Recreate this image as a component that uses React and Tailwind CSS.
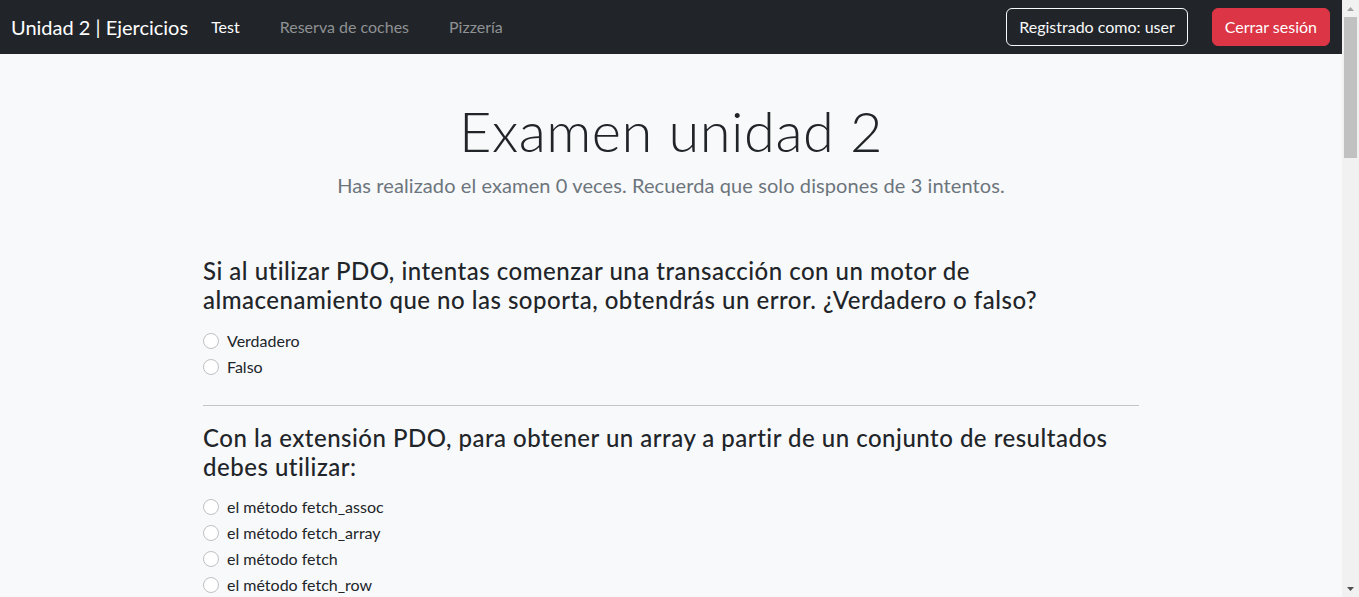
function Radio({ label }) {
  return (
    <label className="flex items-center h-6 mb-[2px] text-[16px] leading-6 text-[#212529]">
      <span className="w-4 h-4 rounded-full border border-[#bfc1c3] bg-white shrink-0" />
      <span className="ml-2">{label}</span>
    </label>
  );
}

function Question({ lines, options, optionsClass }) {
  return (
    <div>
      <h4 className="text-[24px] font-medium leading-[29px] text-[#212529] tracking-[0.5px]">
        {lines.map((l, i) => (
          <span key={i} className="block whitespace-nowrap">{l}</span>
        ))}
      </h4>
      <div className={optionsClass}>
        {options.map((o) => (
          <Radio key={o} label={o} />
        ))}
      </div>
    </div>
  );
}

export default function App() {
  return (
    <div className="flex h-[597px] overflow-hidden font-['Lato',sans-serif]">
      <div className="flex-1 min-w-0 bg-[#f8f9fa]">
        <nav className="h-[54px] bg-[#212529] flex items-center justify-between pl-[11px] pr-3 pb-[1px]">
          <div className="flex items-center">
            <span className="text-[20px] leading-[30px] text-white">Unidad 2 | Ejercicios</span>
            <div className="flex items-center ml-[23px] gap-10 text-[16px] leading-6">
              <span className="text-white">Test</span>
              <span className="text-[#8f9193]">Reserva de coches</span>
              <span className="text-[#8f9193]">Pizzería</span>
            </div>
          </div>
          <div className="flex items-center gap-6">
            <span className="border border-[#f8f9fa] rounded-[6px] px-3 py-[6px] text-[16px] leading-6 text-[#f8f9fa]">
              Registrado como: user
            </span>
            <span className="border border-[#dc3545] bg-[#dc3545] rounded-[6px] px-3 py-[6px] text-[16px] leading-6 text-white">
              Cerrar sesión
            </span>
          </div>
        </nav>
        <main className="w-[936px] mx-auto">
          <h1 className="mt-[43px] text-center text-[56px] font-light leading-[67px] tracking-[0.5px] text-[#212529]">
            Examen unidad 2
          </h1>
          <p className="mt-[6px] text-center text-[20px] font-normal leading-[30px] tracking-[0.1px] text-[#6c757d]">
            Has realizado el examen 0 veces. Recuerda que solo dispones de 3 intentos.
          </p>
          <div className="mt-[56px]">
            <Question
              lines={[
                'Si al utilizar PDO, intentas comenzar una transacción con un motor de',
                'almacenamiento que no las soporta, obtendrás un error. ¿Verdadero o falso?',
              ]}
              options={['Verdadero', 'Falso']}
              optionsClass="mt-[15px]"
            />
          </div>
          <hr className="mt-[26px] mb-[17px] border-0 border-t border-[#c4c5c7]" />
          <Question
            lines={[
              'Con la extensión PDO, para obtener un array a partir de un conjunto de resultados',
              'debes utilizar:',
            ]}
            options={['el método fetch_assoc', 'el método fetch_array', 'el método fetch', 'el método fetch_row']}
            optionsClass="mt-[14px]"
          />
        </main>
      </div>
      <div className="w-[17px] h-[597px] bg-[#f1f1f1] flex flex-col shrink-0">
        <div className="h-[17px] flex items-center justify-center">
          <svg width="7" height="4" viewBox="0 0 7 4">
            <path d="M0 4 L3.5 0 L7 4 Z" fill="#a3a3a3" />
          </svg>
        </div>
        <div className="h-[141px] mx-[2px] bg-[#c1c1c1]" />
        <div className="flex-1" />
        <div className="h-[17px] flex items-center justify-center">
          <svg width="7" height="4" viewBox="0 0 7 4">
            <path d="M0 0 L7 0 L3.5 4 Z" fill="#505050" />
          </svg>
        </div>
      </div>
    </div>
  );
}
